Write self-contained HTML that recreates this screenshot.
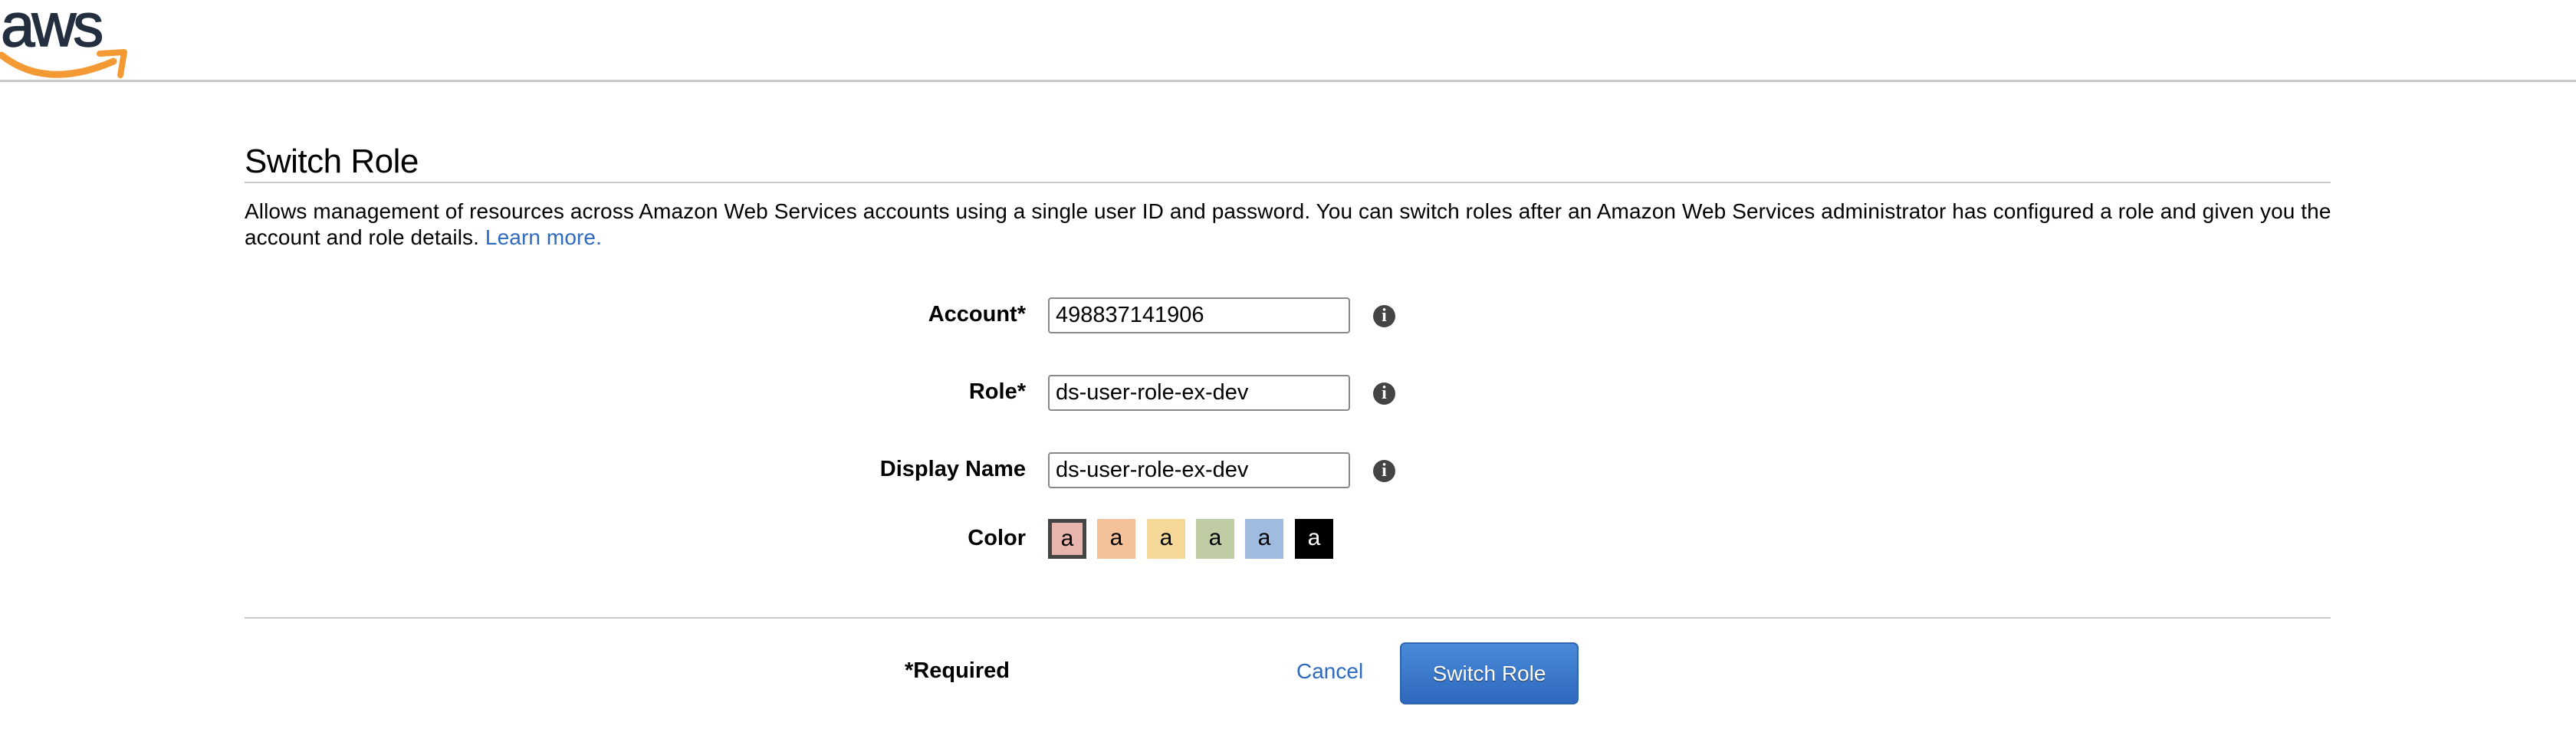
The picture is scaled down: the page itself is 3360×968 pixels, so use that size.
<!DOCTYPE html>
<html><head><meta charset="utf-8"><style>
body{margin:0;width:3360px;height:968px;background:#fff;font-family:"Liberation Sans",Arial,sans-serif;color:#000;position:relative;overflow:hidden}
.a{position:absolute}
.hl{position:absolute;background:#c8c8c8}
.lbl{position:absolute;font-weight:bold;font-size:29px;text-align:right;width:600px;left:738px}
.inp{position:absolute;left:1367px;width:382px;height:43px;border:2px solid #888;border-radius:4px;font-size:29px;line-height:43px;padding-left:8px;box-sizing:content-box}
.info{position:absolute;left:1791px;width:29px;height:29px;border-radius:50%;background:#444;color:#fff;font-weight:bold;font-size:24px;text-align:center;line-height:29px;font-family:"Liberation Serif",serif}
.sw{position:absolute;top:677px;width:50px;height:52px;font-size:30px;text-align:center;line-height:50px}
</style></head><body>
<svg class="a" style="left:0;top:0" width="170" height="106" viewBox="0 0 170 106">
<text x="1" y="60" font-family="Liberation Sans,sans-serif" font-size="80" fill="#232f3e" letter-spacing="-4" stroke="#232f3e" stroke-width="1.5">aws</text>
<path d="M2 72 Q60 118 148 80" stroke="#f49a34" stroke-width="9" fill="none" stroke-linecap="round"/>
<path d="M130 70 L162 68 L157 98" stroke="#f49a34" stroke-width="8" fill="none" stroke-linejoin="round" stroke-linecap="round"/>
</svg>
<div class="hl" style="left:0;top:104px;width:3360px;height:3px"></div>
<div class="a" style="left:319px;top:186px;font-size:44px;letter-spacing:-0.5px">Switch Role</div>
<div class="hl" style="left:319px;top:237px;width:2721px;height:2px"></div>
<div class="a" style="left:319px;top:259px;width:2770px;font-size:28px;line-height:34px;letter-spacing:0.1px">Allows management of resources across Amazon Web Services accounts using a single user ID and password. You can switch roles after an Amazon Web Services administrator has configured a role and given you the<br>account and role details. <span style="color:#2d6ac0">Learn more.</span></div>
<div class="lbl" style="top:394px">Account*</div>
<div class="inp" style="top:388px">498837141906</div>
<div class="info" style="top:398px">i</div>
<div class="lbl" style="top:495px">Role*</div>
<div class="inp" style="top:489px">ds-user-role-ex-dev</div>
<div class="info" style="top:499px">i</div>
<div class="lbl" style="top:596px">Display Name</div>
<div class="inp" style="top:590px">ds-user-role-ex-dev</div>
<div class="info" style="top:600px">i</div>
<div class="lbl" style="top:686px">Color</div>
<div class="sw" style="left:1367px;background:#e8b4ae;border:5px solid #444;box-sizing:border-box;line-height:42px">a</div>
<div class="sw" style="left:1431px;background:#f3c19a">a</div>
<div class="sw" style="left:1496px;background:#f5d898">a</div>
<div class="sw" style="left:1560px;background:#bfcca4">a</div>
<div class="sw" style="left:1624px;background:#9fbbe0">a</div>
<div class="sw" style="left:1689px;background:#000;color:#fff">a</div>
<div class="hl" style="left:319px;top:805px;width:2721px;height:2px"></div>
<div class="a" style="left:1180px;top:859px;font-weight:bold;font-size:29px">*Required</div>
<div class="a" style="left:1691px;top:860px;font-size:28px;color:#2d6ac0">Cancel</div>
<div class="a" style="left:1826px;top:838px;width:229px;height:77px;border:2px solid #2f64b0;border-radius:7px;background:linear-gradient(#4a8ad8,#2e69bf);color:#fff;font-size:28px;text-align:center;line-height:77px;text-shadow:0 1px 1px #234">Switch Role</div>
</body></html>
